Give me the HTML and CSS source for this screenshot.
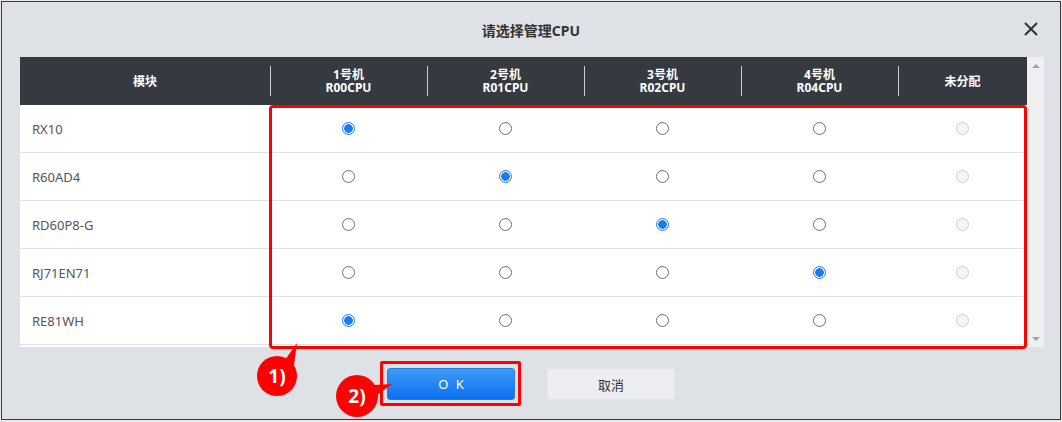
FILE: index.html
```html
<!DOCTYPE html>
<html lang="zh">
<head>
<meta charset="utf-8">
<title>请选择管理CPU</title>
<link rel="stylesheet" href="styles.css">
</head>
<body>
<div class="dialog">
  <div class="titlebar">
    <span class="title">请选择管理CPU</span>
    <svg class="close" width="14" height="14" viewBox="0 0 14 14"><path d="M1 1 L13 13 M13 1 L1 13" stroke="#333" stroke-width="2" fill="none"/></svg>
  </div>
  <div class="tablewrap">
    <div class="grid">
      <div class="hcell first">模块</div>
      <div class="hcell"><span class="ln">1号机</span><span class="ln">R00CPU</span></div>
      <div class="hcell"><span class="ln">2号机</span><span class="ln">R01CPU</span></div>
      <div class="hcell"><span class="ln">3号机</span><span class="ln">R02CPU</span></div>
      <div class="hcell"><span class="ln">4号机</span><span class="ln">R04CPU</span></div>
      <div class="hcell">未分配</div>

      <div class="cell name">RX10</div>
      <div class="cell"><span class="radio on"></span></div>
      <div class="cell"><span class="radio"></span></div>
      <div class="cell"><span class="radio"></span></div>
      <div class="cell"><span class="radio"></span></div>
      <div class="cell"><span class="radio off"></span></div>

      <div class="cell name">R60AD4</div>
      <div class="cell"><span class="radio"></span></div>
      <div class="cell"><span class="radio on"></span></div>
      <div class="cell"><span class="radio"></span></div>
      <div class="cell"><span class="radio"></span></div>
      <div class="cell"><span class="radio off"></span></div>

      <div class="cell name">RD60P8-G</div>
      <div class="cell"><span class="radio"></span></div>
      <div class="cell"><span class="radio"></span></div>
      <div class="cell"><span class="radio on"></span></div>
      <div class="cell"><span class="radio"></span></div>
      <div class="cell"><span class="radio off"></span></div>

      <div class="cell name">RJ71EN71</div>
      <div class="cell"><span class="radio"></span></div>
      <div class="cell"><span class="radio"></span></div>
      <div class="cell"><span class="radio"></span></div>
      <div class="cell"><span class="radio on"></span></div>
      <div class="cell"><span class="radio off"></span></div>

      <div class="cell name">RE81WH</div>
      <div class="cell"><span class="radio on"></span></div>
      <div class="cell"><span class="radio"></span></div>
      <div class="cell"><span class="radio"></span></div>
      <div class="cell"><span class="radio"></span></div>
      <div class="cell"><span class="radio off"></span></div>

      <div class="cell name"></div>
      <div class="cell"></div>
      <div class="cell"></div>
      <div class="cell"></div>
      <div class="cell"></div>
      <div class="cell"></div>
    </div>
    <div class="scrollbar">
      <span class="arrow up"></span>
      <span class="arrow down"></span>
    </div>
  </div>
  <div class="footer">
    <button class="btn ok">O K</button>
    <button class="btn cancel">取消</button>
  </div>

  <div class="redbox table-box"></div>
  <div class="redbox ok-box"></div>
  <svg class="marks" width="150" height="84" viewBox="0 0 150 84">
    <polygon points="35,25 47,8 44,30" fill="#f00"/>
    <circle cx="27" cy="41" r="20" fill="#f00"/>
    <polygon points="124,50 142,49 126,61" fill="#f00"/>
    <circle cx="107" cy="61" r="21" fill="#f00"/>
    <text x="27" y="48" class="marktext" text-anchor="middle">1)</text>
    <text x="107" y="68" class="marktext" text-anchor="middle">2)</text>
  </svg>
</div>
</body>
</html>
```
FILE: styles.css
```css
html, body {
  margin: 0;
  padding: 0;
  background: #e9e9e9;
}
body {
  padding: 1px;
  font-family: "Noto Sans", "Noto Sans CJK SC", sans-serif;
}
.dialog {
  position: relative;
  box-sizing: border-box;
  width: 1060px;
  height: 419px;
  border: 1px solid #3a3a3a;
  background: #dee1e6;
  display: flex;
  flex-direction: column;
}
.titlebar {
  height: 55px;
  display: flex;
  align-items: center;
  justify-content: center;
  position: relative;
}
.title {
  font-size: 14px;
  font-weight: bold;
  color: #333;
}
.close {
  position: absolute;
  right: 22px;
  top: 20px;
}
.tablewrap {
  margin-left: 18px;
  display: flex;
  height: 290px;
}
.grid {
  width: 1007px;
  height: 290px;
  overflow: hidden;
  display: grid;
  grid-template-columns: 250px 157px 157px 157px 157px 129px;
  grid-auto-rows: 48px;
  background: #fff;
}
.hcell {
  background: #353a41;
  color: #fff;
  font-size: 12px;
  font-weight: bold;
  line-height: 13px;
  text-align: center;
  display: flex;
  flex-direction: column;
  align-items: center;
  justify-content: center;
  position: relative;
}
.ln {
  display: block;
  height: 13px;
  line-height: 13px;
}
.hcell::before {
  content: "";
  position: absolute;
  left: 0;
  top: 9px;
  bottom: 9px;
  width: 1px;
  background: #c9cbcf;
}
.hcell.first::before {
  display: none;
}
.cell {
  box-sizing: border-box;
  border-bottom: 1px solid #e1e1e1;
  display: flex;
  align-items: center;
  justify-content: center;
}
.cell.name {
  justify-content: flex-start;
  padding-left: 12px;
  font-size: 13px;
  color: #555;
}
.radio {
  box-sizing: border-box;
  width: 13px;
  height: 13px;
  border-radius: 50%;
  border: 1px solid #6e6e6e;
  background: #fff;
  margin-top: -1px;
}
.radio.on {
  border-color: #1a78f2;
  background: radial-gradient(circle, #1a78f2 0 4px, #fff 4.6px);
}
.radio.off {
  border-color: #cfcfcf;
  background: #f5f5f5;
}
.scrollbar {
  width: 17px;
  height: 290px;
  background: #f0f0f0;
  position: relative;
}
.arrow {
  position: absolute;
  left: 5px;
  width: 0;
  height: 0;
  border-left: 4px solid transparent;
  border-right: 4px solid transparent;
}
.arrow.up {
  top: 7px;
  border-bottom: 4px solid #a3a3a3;
}
.arrow.down {
  bottom: 6px;
  border-top: 4px solid #a3a3a3;
}
.footer {
  display: flex;
  justify-content: center;
  gap: 32px;
  padding-top: 21px;
}
.btn {
  width: 128px;
  height: 32px;
  border-radius: 3px;
  font-family: "Noto Sans", "Noto Sans CJK SC", sans-serif;
  font-size: 13px;
  padding: 0;
  cursor: pointer;
}
.btn.ok {
  border: 1px solid #2a7de0;
  background: linear-gradient(#3e9bf8, #0b6ff0);
  color: #fff;
  letter-spacing: 2px;
  text-indent: 2px;
}
.btn.cancel {
  border: 1px solid #e3e5e8;
  background: #eceef1;
  color: #333;
}
.redbox {
  position: absolute;
  box-sizing: border-box;
  border: 3px solid #ff0000;
  border-radius: 4px;
}
.table-box {
  left: 267px;
  top: 103px;
  width: 758px;
  height: 244px;
}
.ok-box {
  left: 378px;
  top: 359px;
  width: 141px;
  height: 45px;
  border-radius: 2px;
}
.marks {
  position: absolute;
  left: 248px;
  top: 333px;
}
.marktext {
  font-family: "Noto Sans", sans-serif;
  font-size: 19px;
  font-weight: bold;
  fill: #fff;
}
```
